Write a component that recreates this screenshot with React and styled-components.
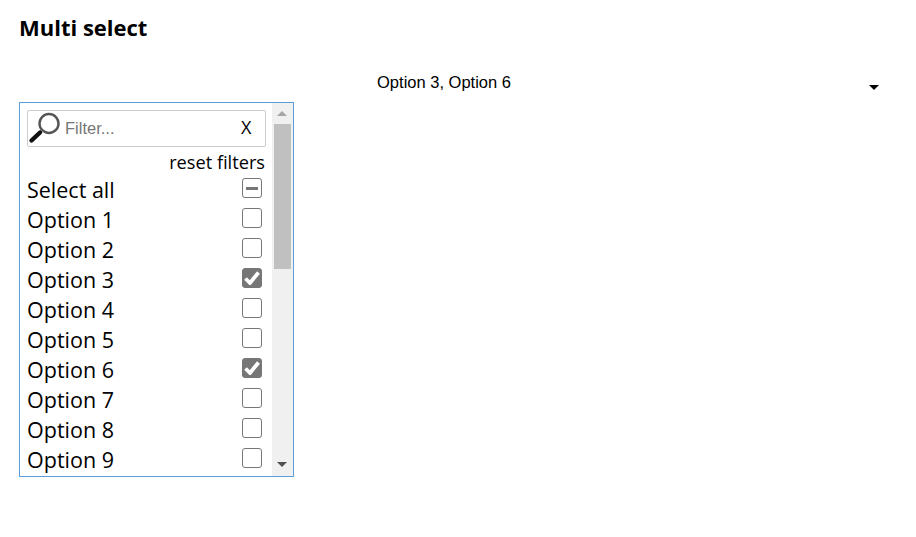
import React from 'react';
import styled, { createGlobalStyle } from 'styled-components';

const GlobalStyle = createGlobalStyle`
    html, body {
        margin: 0;
        padding: 0;
        background: #fff;
        color: #000;
        font-family: "Open Sans", "Noto Sans", sans-serif;
    }
`;

const Page = styled.div`
    padding: 13px 19px 0 19px;
    width: 916px;
    height: 537px;
    box-sizing: border-box;
    overflow: hidden;
`;

const Title = styled.h1`
    margin: 0;
    font-size: 22px;
    line-height: 29px;
    font-weight: 700;
`;

const SelectButton = styled.div`
    position: relative;
    display: flex;
    justify-content: center;
    width: 878px;
    height: 45px;
    margin-top: 15px;
    padding: 15px 28px 0 0;
    box-sizing: border-box;
    font-family: "Liberation Sans", Arial, sans-serif;
    font-size: 16.5px;
    line-height: 20px;
`;

const Caret = styled.span`
    position: absolute;
    right: 18px;
    top: 28px;
    width: 0;
    height: 0;
    border-left: 5px solid transparent;
    border-right: 5px solid transparent;
    border-top: 5px solid #000;
`;

const Panel = styled.div`
    display: flex;
    width: 275px;
    height: 375px;
    box-sizing: border-box;
    border: 1px solid #5a9fdc;
    overflow: hidden;
`;

const Content = styled.div`
    flex: 1;
    min-width: 0;
    padding: 7px 6px 0 7px;
`;

const FilterBox = styled.div`
    display: flex;
    align-items: center;
    height: 37px;
    box-sizing: border-box;
    border: 1px solid #ccc;
    border-radius: 2px;
    padding: 0 0 3px 0;
`;

const FilterText = styled.span`
    flex: 1;
    margin: 2px 0 0 3px;
    font-family: "Liberation Sans", Arial, sans-serif;
    font-size: 16.5px;
    color: #757575;
`;

const ClearButton = styled.span`
    width: 24px;
    font-size: 18px;
    text-align: left;
`;

const ResetLink = styled.div`
    height: 28px;
    line-height: 30px;
    font-size: 18.2px;
    text-align: right;
    padding-right: 1px;
`;

const Row = styled.div`
    display: flex;
    justify-content: space-between;
    height: 30px;
    line-height: 30px;
    font-size: 21.5px;
    padding-right: 4px;
`;

const Box = styled.span`
    display: flex;
    align-items: center;
    justify-content: center;
    width: 20px;
    height: 20px;
    margin-top: 3px;
    box-sizing: border-box;
    border: 1.5px solid #767676;
    border-radius: 3px;
    background: ${({ $checked }) => ($checked ? '#767676' : '#fff')};
`;

const Scrollbar = styled.div`
    position: relative;
    flex: none;
    width: 21px;
    background: #f0f0f0;
`;

const ScrollThumb = styled.div`
    position: absolute;
    top: 21px;
    left: 2px;
    width: 17px;
    height: 145px;
    background: #c0c0c0;
`;

const ArrowUp = styled.span`
    position: absolute;
    top: 8px;
    left: 5px;
    border-left: 5px solid transparent;
    border-right: 5px solid transparent;
    border-bottom: 5px solid #a6a6a6;
`;

const ArrowDown = styled.span`
    position: absolute;
    bottom: 9px;
    left: 5px;
    border-left: 5px solid transparent;
    border-right: 5px solid transparent;
    border-top: 5px solid #505050;
`;

const Dash = styled.span`
    width: 12px;
    height: 3px;
    background: #767676;
`;

const MagnifierIcon = () => (
    <svg width="34" height="34" viewBox="0 0 34 34" fill="none">
        <circle cx="21" cy="13.5" r="9.5" stroke="#555" strokeWidth="2.4" fill="#fff" />
        <path d="M14 20.5 L12 22.5" stroke="#888" strokeWidth="2.5" />
        <path d="M12 22.5 L3.5 30.5" stroke="#111" strokeWidth="4.4" strokeLinecap="round" />
    </svg>
);

const CheckIcon = () => (
    <svg width="16" height="14" viewBox="0 0 16 14" fill="none">
        <path d="M1.5 7.5 L6 12 L14.5 1.5" stroke="#fff" strokeWidth="3.8" />
    </svg>
);

const options = [
    { label: 'Option 1' },
    { label: 'Option 2' },
    { label: 'Option 3', checked: true },
    { label: 'Option 4' },
    { label: 'Option 5' },
    { label: 'Option 6', checked: true },
    { label: 'Option 7' },
    { label: 'Option 8' },
    { label: 'Option 9' },
];

const App = () => {
    return (
        <Page>
            <GlobalStyle />
            <Title>Multi select</Title>
            <SelectButton>
                Option 3, Option 6
                <Caret />
            </SelectButton>
            <Panel>
                <Content>
                    <FilterBox>
                        <MagnifierIcon />
                        <FilterText>Filter...</FilterText>
                        <ClearButton>X</ClearButton>
                    </FilterBox>
                    <ResetLink>reset filters</ResetLink>
                    <Row>
                        <span>Select all</span>
                        <Box><Dash /></Box>
                    </Row>
                    {options.map(option => (
                        <Row key={option.label}>
                            <span>{option.label}</span>
                            <Box $checked={option.checked}>
                                {option.checked && <CheckIcon />}
                            </Box>
                        </Row>
                    ))}
                </Content>
                <Scrollbar>
                    <ArrowUp />
                    <ScrollThumb />
                    <ArrowDown />
                </Scrollbar>
            </Panel>
        </Page>
    );
};

export default App;
